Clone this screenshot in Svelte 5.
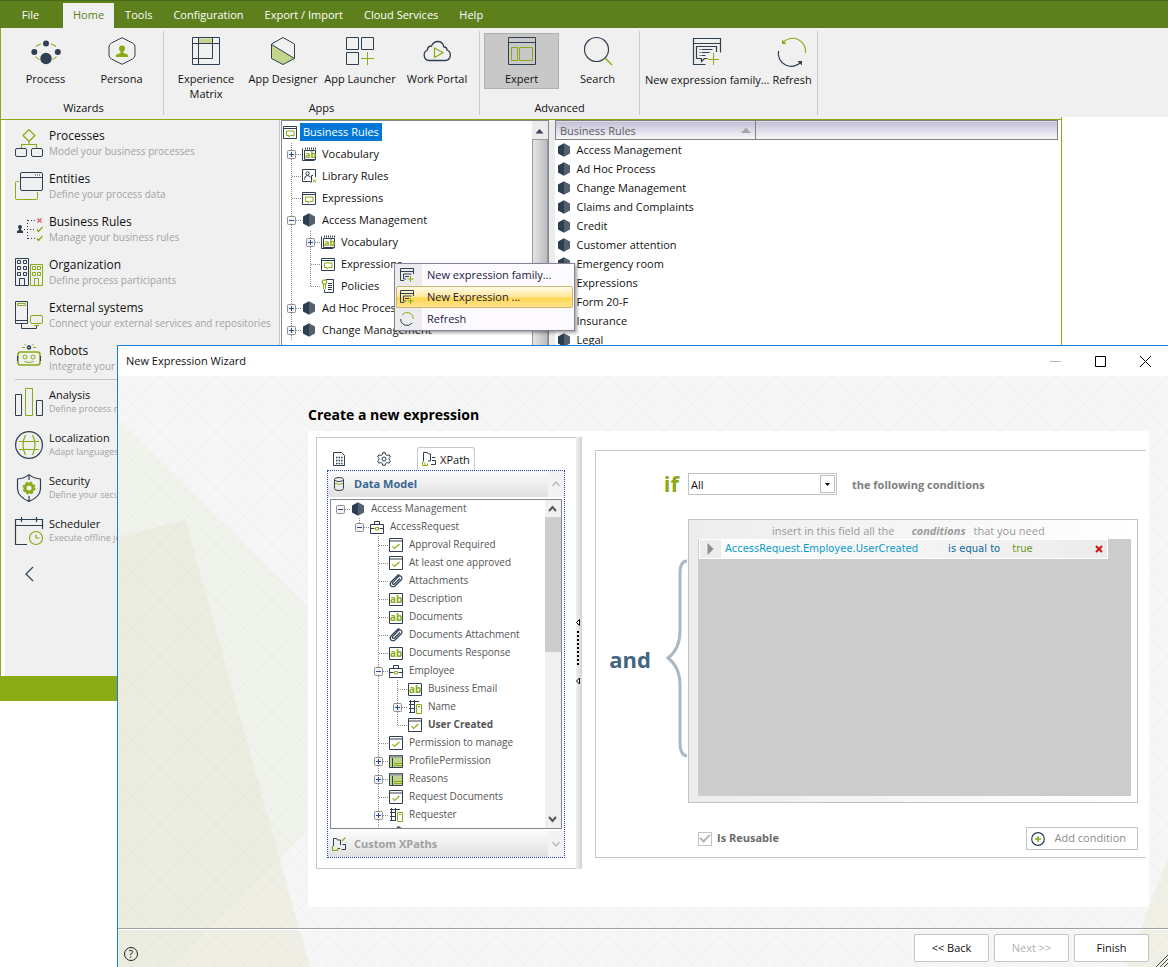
<script lang="ts">
	interface TreeRow {
		cols: string;
		toggle?: 'plus' | 'minus';
		icon: string;
		label: string;
		state?: 'selected' | 'strong';
	}

	const navy = '#2e3f52';
	const lime = '#8aab15';

	// Large glyphs, drawn on a 28 x 28 grid
	const icons: Record<string, string> = {
		process: `<g fill="none" stroke="${lime}" stroke-width="1.2"><path d="M4 9.500Q6 7.500 9 7M19 7q3 .5 5 2.500M3.500 19.500q1.500 2 4 3M24.500 19.500q-1.500 2-4 3"/></g><g fill="${navy}"><circle cx="14" cy="6.600" r="3"/><circle cx="2.300" cy="15" r="3"/><circle cx="25.800" cy="15" r="3"/><circle cx="14" cy="21.500" r="5.700"/></g>`,
		persona: `<path d="M14 .7 24.500 6q2.500 1.500 2.500 4v8q0 2.500-2.500 4L14 27.300 3.500 22Q1 20.500 1 18v-8q0-2.500 2.500-4z" fill="none" stroke="${navy}"/><g fill="${lime}"><circle cx="14" cy="11.500" r="3"/><path d="M12.500 13h3v3l4 1.500q1 .5.500 2.500H8q-.5-2 .5-2.500l4-1.500z"/></g>`,
		matrix: `<path d="M7 1.500h13V6H7z" fill="#c3d48d"/><path d="M.5.5h27v27H.5zM6.500.5v27M20.500.5v21H.5M.5 6.500h27" fill="none" stroke="${navy}"/>`,
		designer: `<path d="M2.500 7.500 25.500 21.500 14 27.500 2.500 21.500z" fill="#c3d48d"/><path d="M14 .5 25.500 7v14.500L14 27.500 2.500 21.500V7zM2.500 7.500l23 14" fill="none" stroke="${navy}"/>`,
		launcher: `<path d="M.5.5h12v12H.5zM15.500.5h12v12h-12zM.5 15.500h12v12H.5z" fill="none" stroke="${navy}"/><path d="M21.500 15v13M15 21.500h13" stroke="${lime}"/>`,
		portal: `<path d="M6 23.500a5.500 5.500 0 0 1-1.500-10.500q0-4 4-4 2-4.500 6.500-4.500t6 5.500q3 0 3 3a5.500 5.500 0 0 1-1.500 10.500z" fill="none" stroke="${navy}" stroke-width="1.300"/><path d="M11.500 11v9.500L20 15.700z" fill="none" stroke="${lime}" stroke-width="1.200"/>`,
		expert: `<path d="M.5.5h27v27H.5zM.5 5.500h27" fill="none" stroke="${navy}"/><path d="M3.500 10.500h6v13h-6zM11.500 10.500h13v13h-13z" fill="none" stroke="${lime}"/>`,
		search: `<circle cx="12.500" cy="12.500" r="12" fill="none" stroke="${navy}" stroke-width="1.200"/><path d="m21 21 7 7" stroke="${lime}" stroke-width="1.500"/>`,
		family: `<path d="M12.500 26.500H.5V.5h27v14M.5 5.500h27M23.500 14V8.500h-20v12h5v3l3-3h3" fill="none" stroke="${navy}" stroke-width="1.200"/><path d="M6.500 11.500h1m1 0h11m-13 3h1m1 0h8m-10 3h1m1 0h4" stroke="${navy}"/><path d="M20.500 15v12M15 21.500h11" stroke="${lime}"/>`,
		refresh: `<path d="M5 4.500a13 13 0 0 1 22.500 10.500" fill="none" stroke="${lime}" stroke-width="1.200"/><path d="M4 1.500v4.500h4.500z" fill="${lime}"/><path d="M.5 13A13 13 0 0 0 23 24" fill="none" stroke="${navy}" stroke-width="1.200"/><path d="M24 27.500V23h-4.500z" fill="${navy}"/>`,
		processes: `<path d="m14 .7 6 5.800-6 5.800-6-5.800zM14 12.500v3M6.500 19v-3.500h15V19" fill="none" stroke="${lime}" stroke-width="1.200"/><rect x=".5" y="19.500" width="11" height="8" rx="1.500" fill="none" stroke="${navy}"/><rect x="16.500" y="19.500" width="11" height="8" rx="1.500" fill="none" stroke="${navy}"/>`,
		entities: `<path d="M4 9.500H1.500q-1 0-1 1v16q0 1 1 1h20q1 0 1-1V20" fill="none" stroke="${lime}"/><rect x="5.500" y=".5" width="22" height="18" rx="1.500" fill="none" stroke="${navy}"/><path d="M5.500 5.500h22" stroke="${navy}"/><path d="M20 3h6" stroke="${navy}" stroke-dasharray="1 1"/>`,
		rules: `<g fill="${navy}"><circle cx="5" cy="12" r="2"/><path d="M4 13h2v2l2 1v2H2v-2l2-1z"/></g><path d="M9 14.500h12M12.500 5v19M13 5.500h7M13 23.500h7" stroke="${navy}" stroke-dasharray="1 2"/><path d="m22.500 3.500 4 4m0-4-4 4" stroke="#e0606c" stroke-width="1.400"/><path d="m22 14.500 1.500 2 4-4.500M22 23.500l1.500 2 4-4.500" fill="none" stroke="${lime}" stroke-width="1.400"/>`,
		organization: `<path d="M.5.500h13v27H.5zM2.500 2.500h3v3h-3zM8.500 2.500h3v3h-3zM2.500 8.500h3v3h-3zM8.500 8.500h3v3h-3zM2.500 14.500h3v3h-3zM8.500 14.500h3v3h-3zM4.500 27v-6.500h5V27" fill="none" stroke="${navy}"/><path d="M15.500 6.500h12v21h-12zM17.500 8.500h3v3h-3zM22.500 8.500h3v3h-3zM17.500 14.500h3v3h-3zM22.500 14.500h3v3h-3zM19.500 27v-6.500h4V27" fill="none" stroke="${lime}"/>`,
		external: `<path d="M.5.5h12v22H.5zM.5 19.500h12M6.500 23v4.500h15V25" fill="none" stroke="${navy}"/><path d="M2.500 2.500h8v2h-8z" fill="none" stroke="${lime}"/><rect x="15.500" y="14.500" width="12" height="8" rx="1.500" fill="none" stroke="${lime}"/><path d="M19 24.500h5" stroke="${lime}"/>`,
		robots: `<circle cx="14" cy="3.500" r="1.500" fill="none" stroke="${navy}" stroke-width="1.500"/><path d="M9.500 0 11 1.500M18.500 0 17 1.500M7 3.500h3M18 3.500h3" stroke="${lime}"/><rect x="3" y="8" width="22" height="13" rx="2.500" fill="none" stroke="${lime}" stroke-width="1.600"/><path d="M2.500 12v5M25.500 12v5" stroke="${navy}"/><g fill="none" stroke="${lime}"><circle cx="10" cy="13" r="2"/><circle cx="18" cy="13" r="2"/><path d="M9.500 17.500q4.500 2 9 0"/></g>`,
		analysis: `<path d="M.5 6.500h6v21h-6zM21.500 12.500h6v15h-6z" fill="none" stroke="${navy}"/><path d="M10.500.5h7v27h-7z" fill="none" stroke="${lime}"/>`,
		localization: `<circle cx="14" cy="14" r="13.400" fill="none" stroke="${navy}" stroke-width="1.200"/><path d="M4 10.500h20M4 18.500h20M10.500 4q-5 10 0 20M17.500 4q5 10 0 20" fill="none" stroke="${lime}" stroke-width="1.200"/>`,
		security: `<path d="M14 .6q5 4 11.500 4.400V15q-.5 8-11.500 12.400Q3 23 2.500 15V5Q9 4.600 14 .6zM14 1v5M14 22v5" fill="none" stroke="${navy}" stroke-width="1.200"/><circle cx="14" cy="14" r="4" fill="none" stroke="${lime}" stroke-width="3"/><circle cx="14" cy="14" r="5.700" fill="none" stroke="${lime}" stroke-width="1.500" stroke-dasharray="2.500 2"/>`,
		scheduler: `<path d="M12 27.500H.5v-25h27V12M.5 8.500h27M6.500 0v5M21.500 0v5" fill="none" stroke="${navy}" stroke-width="1.200"/><g fill="none" stroke="${lime}" stroke-width="1.200"><circle cx="21" cy="21" r="6.500"/><path d="M21 17.500v3.500h3.500"/></g>`
	};

	// Small glyphs, drawn on a 14 x 14 grid
	const glyphs: Record<string, string> = {
		expression: `<path d="M.5 1.500h13v12H.5zM.5 3.500h13" fill="none" stroke="${navy}"/><path d="M3.500 6h7.500v4.500H7.500L6 12v-1.500H3.500z" fill="none" stroke="${lime}"/>`,
		vocabulary: `<path d="M2.500 3.500h11v9h-11zM.5 1.500v12h12" fill="none" stroke="${navy}"/><path d="M3 1.500h11" stroke="${navy}" stroke-dasharray="1 1" stroke-width="2"/><text x="3" y="11" font-family="Open Sans, sans-serif" font-size="9" font-weight="700" fill="${lime}">ab</text>`,
		library: `<path d="M8 12.500H.5V.5h13V8" fill="none" stroke="${navy}"/><circle cx="5.500" cy="4.500" r="1.700" fill="none" stroke="${navy}"/><path d="M2.500 10.500q0-4 3-4 2 0 3 2M11 6.500H9.500V13H8" fill="none" stroke="${navy}"/><path d="m11 10.500 3 3m0-3-3 3" stroke="${lime}"/>`,
		policies: `<path d="M5 .5h7.500v13h-9v-3M7 4.500h4M7 6.500h4M7 8.500h4M7 10.500h4" fill="none" stroke="${navy}"/><circle cx="3.500" cy="3" r="2.200" fill="#fff" stroke="${lime}" stroke-width="1.200"/><path d="M2.500 5v5M4.500 5v5" stroke="${lime}"/>`,
		process: `<path d="M7 .3 1 3.500v7l6 3.200z" fill="#2c3e50"/><path d="m7 .3 6 3.200v7l-6 3.200z" fill="#53616f"/>`,
		addexpression: `<path d="M4 12.500H.5v-12h13V6M.5 3.500h13M11.500 6h-8v5H6M5 8.500h4" fill="none" stroke="${navy}"/><path d="M10.500 8v6M7.500 11h6" stroke="${lime}"/>`,
		refresh: `<path d="M2 3a6.300 6.300 0 0 1 11.300 4" fill="none" stroke="${lime}"/><path d="M.7 7A6.300 6.300 0 0 0 12 11" fill="none" stroke="${navy}"/>`,
		entity: `<path d="M.5 4.500h13v9H.5zM4.500 4.500v-3h5v3M.5 8.500h4M9.500 8.500h4" fill="none" stroke="${navy}"/><path d="M5.500 7.500h3v2.500h-3z" fill="none" stroke="${lime}"/>`,
		check: `<path d="M.5.500h13v13H.5zM.5 3h13" fill="none" stroke="${navy}"/><path d="m3.500 8 2 2.500L10.500 6" fill="none" stroke="${lime}" stroke-width="1.200"/>`,
		clip: `<path d="M11 4.500 5.500 10q-1 .8-1.700 0-.8-.8 0-1.700L9.500 2.500q1.500-1.200 3 0 1.200 1.500 0 3L6 12q-2 1.500-4 0-1.700-2 0-4l6.500-6.500q1-.8 2-.8" fill="none" stroke="${navy}" stroke-width="1.200"/>`,
		text: `<path d="M.5 1.500h13v12H.5z" fill="none" stroke="${navy}"/><text x="1" y="11" font-family="Open Sans, sans-serif" font-size="10" font-weight="700" fill="${lime}">ab</text>`,
		table: `<path d="M1 2h12v11H1z" fill="#c3d48d"/><path d="M.5 1.500h13v12H.5zM3.500 4v9" fill="none" stroke="${navy}"/><path d="M1 2.500h12" stroke="#8a96a2" stroke-width="2"/><path d="M5 9.500h8M5 11.500h8" stroke="${lime}"/>`,
		related: `<path d="M2.500 0v13M1 1.500h10M1 4.500h6M1 8.500h5M1 12.500h5M6.500 0v13" fill="none" stroke="${navy}"/><path d="M8.500 4.500h5v9h-5zM10 6.500h2" fill="#fff" stroke="${lime}"/>`,
		calc: `<path d="M1.500.5h8l3 3v10h-11z" fill="none" stroke="${navy}"/><path d="M4 5.500h1.500m1 0H8m1 0h1.500M4 8.500h1.500m1 0H8m1 0h1.500M4 11.500h1.500m1 0H8m1 0h1.500" stroke="${navy}" stroke-width="1.500"/>`,
		gear: `<circle cx="7" cy="7" r="2" fill="none" stroke="${navy}"/><path d="M5.700.7h2.600l.4 1.900 1.500.9 1.900-.7 1.300 2.200L12 6.300v1.400l1.400 1.300-1.300 2.200-1.900-.7-1.500.9-.4 1.900H5.700l-.4-1.900-1.500-.9-1.900.7L.6 9 2 7.700V6.300L.6 5l1.300-2.200 1.900.7 1.500-.9z" fill="none" stroke="${navy}"/>`,
		xpath: `<path d="M1.500 9.500V.5h4l1 1.500h2v7H6M10 5.500h3.500M9 12.500h4.500V8.500H10" fill="none" stroke="${navy}"/><path d="M.5 9.500v4h5v-2M3 10.500v3" fill="none" stroke="${lime}"/>`,
		cylinder: `<path d="M2.500 2.500v9q0 2 4.500 2t4.500-2v-9" fill="none" stroke="${navy}"/><ellipse cx="7" cy="2.500" rx="4.500" ry="2" fill="none" stroke="${navy}"/><path d="M3 6.500q4 1.500 8 0" fill="none" stroke="${lime}"/>`,
		xpaths: `<path d="M1.500 9V1.500h3l1 1.500h3v5M9.500 12.500h4v-5h-3M6 11.500h2" fill="none" stroke="${navy}"/><path d="M.5 9v4.500h5v-2M10 4l3.500-3.500" fill="none" stroke="${lime}" stroke-width="1.200"/>`
	};

	const menus = ['File', 'Home', 'Tools', 'Configuration', 'Export / Import', 'Cloud Services', 'Help'];

	const groups = [
		{
			title: 'Wizards',
			items: [
				{ icon: 'process', label: 'Process' },
				{ icon: 'persona', label: 'Persona' }
			]
		},
		{
			title: 'Apps',
			items: [
				{ icon: 'matrix', label: 'Experience Matrix' },
				{ icon: 'designer', label: 'App Designer' },
				{ icon: 'launcher', label: 'App Launcher' },
				{ icon: 'portal', label: 'Work Portal' }
			]
		},
		{
			title: 'Advanced',
			items: [
				{ icon: 'expert', label: 'Expert' },
				{ icon: 'search', label: 'Search' }
			]
		},
		{
			title: '',
			items: [
				{ icon: 'family', label: 'New expression family...' },
				{ icon: 'refresh', label: 'Refresh' }
			]
		}
	];

	const sections = [
		{ icon: 'processes', title: 'Processes', text: 'Model your business processes' },
		{ icon: 'entities', title: 'Entities', text: 'Define your process data' },
		{ icon: 'rules', title: 'Business Rules', text: 'Manage your business rules' },
		{ icon: 'organization', title: 'Organization', text: 'Define process participants' },
		{ icon: 'external', title: 'External systems', text: 'Connect your external services and repositories' },
		{ icon: 'robots', title: 'Robots', text: 'Integrate your' }
	];

	const tools = [
		{ icon: 'analysis', title: 'Analysis', text: 'Define process metrics' },
		{ icon: 'localization', title: 'Localization', text: 'Adapt languages' },
		{ icon: 'security', title: 'Security', text: 'Define your security' },
		{ icon: 'scheduler', title: 'Scheduler', text: 'Execute offline jobs' }
	];

	// cols: "|" line passes, "+" branch that goes on, "L" last branch, "-" branch only, " " empty
	const ruleTree: TreeRow[] = [
		{ cols: '', icon: 'expression', label: 'Business Rules', state: 'selected' },
		{ cols: '+', toggle: 'plus', icon: 'vocabulary', label: 'Vocabulary' },
		{ cols: '+', icon: 'library', label: 'Library Rules' },
		{ cols: '+', icon: 'expression', label: 'Expressions' },
		{ cols: '+', toggle: 'minus', icon: 'process', label: 'Access Management' },
		{ cols: '|+', toggle: 'plus', icon: 'vocabulary', label: 'Vocabulary' },
		{ cols: '|+', icon: 'expression', label: 'Expressions' },
		{ cols: '|L', icon: 'policies', label: 'Policies' },
		{ cols: '+', toggle: 'plus', icon: 'process', label: 'Ad Hoc Process' },
		{ cols: '+', toggle: 'plus', icon: 'process', label: 'Change Management' }
	];

	const modelTree: TreeRow[] = [
		{ cols: '-', toggle: 'minus', icon: 'process', label: 'Access Management' },
		{ cols: ' L', toggle: 'minus', icon: 'entity', label: 'AccessRequest' },
		{ cols: '  +', icon: 'check', label: 'Approval Required' },
		{ cols: '  +', icon: 'check', label: 'At least one approved' },
		{ cols: '  +', icon: 'clip', label: 'Attachments' },
		{ cols: '  +', icon: 'text', label: 'Description' },
		{ cols: '  +', icon: 'text', label: 'Documents' },
		{ cols: '  +', icon: 'clip', label: 'Documents Attachment' },
		{ cols: '  +', icon: 'text', label: 'Documents Response' },
		{ cols: '  +', toggle: 'minus', icon: 'entity', label: 'Employee' },
		{ cols: '  |+', icon: 'text', label: 'Business Email' },
		{ cols: '  |+', toggle: 'plus', icon: 'related', label: 'Name' },
		{ cols: '  |L', icon: 'check', label: 'User Created', state: 'strong' },
		{ cols: '  +', icon: 'check', label: 'Permission to manage' },
		{ cols: '  +', toggle: 'plus', icon: 'table', label: 'ProfilePermission' },
		{ cols: '  +', toggle: 'plus', icon: 'table', label: 'Reasons' },
		{ cols: '  +', icon: 'check', label: 'Request Documents' },
		{ cols: '  +', toggle: 'plus', icon: 'related', label: 'Requester' },
		{ cols: '  +', icon: 'clip', label: '' }
	];

	const rules = [
		'Access Management',
		'Ad Hoc Process',
		'Change Management',
		'Claims and Complaints',
		'Credit',
		'Customer attention',
		'Emergency room',
		'Expressions',
		'Form 20-F',
		'Insurance',
		'Legal'
	];

	const contextItems = [
		{ icon: 'addexpression', label: 'New expression family...' },
		{ icon: 'addexpression', label: 'New Expression ...' },
		{ icon: 'refresh', label: 'Refresh' }
	];

	let quantifier = $state('All');
	let reusable = $state(true);
</script>

{#snippet icon(name: string)}
	<svg class="icon" viewBox="0 0 28 28" width="28" height="28" aria-hidden="true">{@html icons[name]}</svg>
{/snippet}

{#snippet glyph(name: string)}
	<svg class="glyph" viewBox="0 0 14 14" width="14" height="14" aria-hidden="true">{@html glyphs[name]}</svg>
{/snippet}

{#snippet tree(rows: TreeRow[], h: number)}
	{#each rows as row}
		<li class="row {row.state ?? ''}" style="height: {h}px">
			{#each row.cols.split('') as col, i}
				<svg class="guide" width="19" height={h} aria-hidden="true">
					<g stroke="#8c8c8c" stroke-dasharray="1 1">
						{#if col === '|' || col === '+'}<path d="M8.5 0V{h}" />{/if}
						{#if col === 'L'}<path d="M8.5 0V{h / 2}" />{/if}
						{#if col === '+' || col === 'L' || col === '-'}<path d="M9 {h / 2 + 0.5}H18" />{/if}
					</g>
					{#if row.toggle && i === row.cols.length - 1}
						<rect x="4.5" y={h / 2 - 3.5} width="8" height="8" rx="1" fill="#f4f4f4" stroke="#8f8f8f" />
						<path d="M6 {h / 2 + 0.5}H11" stroke="#2a4a9b" />
						{#if row.toggle === 'plus'}<path d="M8.5 {h / 2 - 2}V{h / 2 + 3}" stroke="#2a4a9b" />{/if}
					{/if}
				</svg>
			{/each}
			{@render glyph(row.icon)}
			<span class="label">{row.label}</span>
		</li>
	{/each}
{/snippet}

{#snippet navItem(item: { icon: string; title: string; text: string })}
	<li>
		<a href="#{item.icon}">
			{@render icon(item.icon)}
			<span class="caption"><strong>{item.title}</strong><small>{item.text}</small></span>
		</a>
	</li>
{/snippet}

<div class="desktop">
	<main class="studio">
		<nav class="menubar">
			{#each menus as menu}
				<button type="button" class:active={menu === 'Home'}>{menu}</button>
			{/each}
		</nav>

		<div class="ribbon">
			{#each groups as group}
				<section class="group">
					<div class="commands">
						{#each group.items as item}
							<button type="button" class="command" class:pressed={item.label === 'Expert'}>
								{@render icon(item.icon)}
								<span>{item.label}</span>
							</button>
						{/each}
					</div>
					<span class="group-title">{group.title}</span>
				</section>
			{/each}
		</div>

		<div class="frame">
			<div class="panes">
				<nav class="sidebar">
					<ul>
						{#each sections as item}
							{@render navItem(item)}
						{/each}
					</ul>
					<ul class="minor">
						{#each tools as item}
							{@render navItem(item)}
						{/each}
					</ul>
					<button type="button" class="collapse" aria-label="Collapse">
						<svg width="10" height="16" viewBox="0 0 10 16"><path d="M9 1 2 8l7 7" fill="none" stroke="#2e3f52" stroke-width="1.2" /></svg>
					</button>
				</nav>

				<div class="explorer">
					<ul class="tree">
						{@render tree(ruleTree, 22)}
					</ul>
					<div class="track" aria-hidden="true">
						<svg width="15" height="18" viewBox="0 0 15 18"><path d="M3.500 12.500 7.500 8l4 4.500z" fill="#3a4256" /></svg>
						<span class="thumb"></span>
					</div>
				</div>

				<div class="listing">
					<table>
						<thead>
							<tr>
								<th class="name">
									<span>
										Business Rules
										<svg width="10" height="6" viewBox="0 0 10 6" aria-hidden="true"><path d="m0 6 5-5.500L10 6z" fill="#a5a5ab" /></svg>
									</span>
								</th>
								<th></th>
							</tr>
						</thead>
						<tbody>
							{#each rules as rule}
								<tr>
									<td colspan="2"><span>{@render glyph('process')}{rule}</span></td>
								</tr>
							{/each}
						</tbody>
					</table>
				</div>
			</div>
			<div class="status"></div>
		</div>

		<div class="context" role="menu">
			{#each contextItems as item, i}
				<button type="button" role="menuitem" class:hot={i === 1}>
					{@render glyph(item.icon)}
					<span>{item.label}</span>
				</button>
			{/each}
		</div>
	</main>

	<section class="wizard">
		<header class="titlebar">
			<span>New Expression Wizard</span>
			<div class="window-buttons">
				<button type="button" aria-label="Minimize"><svg width="11" height="11"><path d="M0 5.500h11" stroke="#b5b5b5" /></svg></button>
				<button type="button" aria-label="Maximize"><svg width="11" height="11"><path d="M.5.500h10v10H.5z" fill="none" stroke="#000" /></svg></button>
				<button type="button" aria-label="Close"><svg width="11" height="11"><path d="m0 0 11 11M11 0 0 11" stroke="#000" /></svg></button>
			</div>
		</header>

		<div class="canvas">
			<svg class="backdrop" aria-hidden="true">
				<defs>
					<pattern id="hatch" width="14" height="14" patternUnits="userSpaceOnUse">
						<path d="M0 0 14 14M14 0 0 14" stroke="#000" stroke-opacity=".02" />
					</pattern>
				</defs>
				<path d="M0 44 302 342 53 591H0z" fill="#e8efe2" fill-opacity=".5" />
				<path d="M0 161 67 144 192 591H0z" fill="#e9e8d3" fill-opacity=".5" />
				<svg x="100%" overflow="visible"><path d="M0 480-41 591H0z" fill="#e9e8d3" fill-opacity=".4" /></svg>
				<rect width="100%" height="100%" fill="url(#hatch)" />
			</svg>

			<div class="content">
				<h1>Create a new expression</h1>
				<div class="sheet">
					<div class="picker">
						<div class="tabs">
							<button type="button" aria-label="Variables">{@render glyph('calc')}</button>
							<button type="button" aria-label="Functions">{@render glyph('gear')}</button>
							<button type="button" class="current">{@render glyph('xpath')}XPath</button>
						</div>
						<div class="accordion">
							<button type="button" class="bar">
								{@render glyph('cylinder')}
								<span>Data Model</span>
								<svg class="fold" width="16" height="26"><path d="m4.500 15 3.500-4 3.500 4" fill="none" stroke="#bdbdbd" stroke-width="1.500" /></svg>
							</button>
							<div class="model">
								<ul class="tree">
									{@render tree(modelTree, 18)}
								</ul>
								<div class="slider" aria-hidden="true">
									<svg width="15" height="17"><path d="m4 11 3.500-4 3.500 4" fill="none" stroke="#555" stroke-width="2" /></svg>
									<span class="knob"></span>
									<svg width="15" height="17"><path d="m4 6 3.500 4L11 6" fill="none" stroke="#555" stroke-width="2" /></svg>
								</div>
							</div>
							<button type="button" class="bar closed">
								{@render glyph('xpaths')}
								<span>Custom XPaths</span>
								<svg class="fold" width="16" height="26"><path d="m4.500 11 3.500 4 3.500-4" fill="none" stroke="#bdbdbd" stroke-width="1.500" /></svg>
							</button>
						</div>
					</div>
					<div class="splitter">
						<svg width="6" height="68" aria-hidden="true">
							<path d="M3.500.5v6L.5 3.500zM3.500 59v6L.5 62z" fill="#fff" stroke="#000" />
							<path d="M2 12v36" stroke="#000" stroke-width="2" stroke-dasharray="2 2" />
						</svg>
					</div>

					<div class="editor">
						<b class="if">if</b>
						<div class="quantity">
							<div class="combo">
								<select bind:value={quantifier} aria-label="Which conditions">
									<option>All</option>
								</select>
								<svg width="15" height="18" aria-hidden="true"><path d="M.5.500h14v17H.5z" fill="#fff" stroke="#bdbdbd" /><path d="M5 8h5L7.500 11z" /></svg>
							</div>
							<span>the following conditions</span>
						</div>

						<div class="and">
							<b>and</b>
							<svg width="22" height="200" aria-hidden="true"><path d="M22 2q-7 0-7 12v58q0 18-12 27 12 9 12 27v58q0 12 7 13" fill="none" stroke="#abb9c5" stroke-width="3" /></svg>
						</div>
						<div class="conditions">
							<p>insert in this field all the <em>conditions</em> that you need</p>
							<div class="well">
								<div class="condition">
									<svg width="21" height="18" aria-hidden="true"><path d="M7.500 3v12l6-6z" fill="#8d8d8d" /></svg>
									<a href="#path">AccessRequest.Employee.UserCreated</a>
									<span class="operator">is equal to</span>
									<span class="value">true</span>
									<button type="button" aria-label="Remove condition">
										<svg width="8" height="8"><path d="m1 1 6 6M7 1 1 7" stroke="#cc1414" stroke-width="2" /></svg>
									</button>
								</div>
							</div>
						</div>

						<div class="options">
							<label>
								<input type="checkbox" bind:checked={reusable} />
								<span>Is Reusable</span>
							</label>
							<button type="button" class="add">
								<svg width="14" height="14"><circle cx="7" cy="7" r="6.300" fill="none" stroke="#2e3f52" stroke-width="1.2" /><path d="M7 4v6M4 7h6" stroke="#8aab15" stroke-width="1.500" /></svg>
								<span>Add condition</span>
							</button>
						</div>
					</div>
				</div>
			</div>

			<footer>
				<button type="button" class="help" aria-label="Help">?</button>
				<button type="button" class="step">&lt;&lt; Back</button>
				<button type="button" class="step" disabled>Next &gt;&gt;</button>
				<button type="button" class="step">Finish</button>
				<svg class="grip" width="12" height="12" aria-hidden="true"><path d="M0 12 12 0M4 12l8-8M8 12l4-4" stroke="#444" /></svg>
			</footer>
		</div>
	</section>
</div>

<style>
	:global(body) {
		margin: 0;
		background: #fff;
	}

	.desktop {
		display: grid;
		min-height: 100vh;
		overflow: hidden;
		font-family: 'Open Sans', 'Noto Sans', sans-serif;
		font-size: 11px;
		line-height: 15px;
		color: #111;
	}

	.desktop > * {
		grid-area: 1 / 1;
	}

	button,
	select {
		border: 0;
		padding: 0;
		background: none;
		font: inherit;
		color: inherit;
	}

	ul {
		margin: 0;
		padding: 0;
		list-style: none;
	}

	svg {
		display: block;
		flex: none;
	}

	.icon,
	.glyph {
		overflow: visible;
	}

	.studio {
		position: relative;
		align-self: start;
	}

	.menubar {
		display: flex;
		align-items: end;
		height: 28px;
		box-sizing: border-box;
		border-top: 1px solid #49681a;
		padding-left: 9px;
		background: #5d801c;
	}

	.menubar button {
		height: 25px;
		padding: 0 10px 2px 11px;
		color: #fff;
		white-space: nowrap;
	}

	.menubar button:first-child {
		width: 54px;
		padding: 0 11px 2px 0;
	}

	.menubar .active {
		padding: 0 10px 2px;
		background: #f0f0f0;
		color: #5d801c;
	}

	.ribbon {
		display: flex;
		border-left: 1px solid #8aab15;
		padding: 3px 0 2px 3px;
		background: #f0f0f0;
	}

	.group {
		display: grid;
		grid-template-rows: 67px 15px;
		justify-items: center;
		border-right: 1px solid #cbcbcb;
		padding: 2px 4px 0;
	}

	.commands {
		display: flex;
		align-items: start;
		gap: 1px;
	}

	.command {
		display: grid;
		justify-items: center;
		gap: 6px;
		box-sizing: border-box;
		width: 75px;
		border: 1px solid transparent;
		padding: 3px 0 2px;
	}

	.group:nth-child(2) .command {
		width: 76px;
	}

	.group:last-child .command {
		width: auto;
		padding: 4px 0;
	}

	.command.pressed {
		border-color: #b0b0b0;
		background: #c8c8c8;
	}

	.frame {
		margin-right: 106px;
		border: 1px solid #8aab15;
		border-top: 0;
		padding-top: 2px;
		background: #f0f0f0;
	}

	.panes {
		display: flex;
		border-top: 1px solid #8aab15;
		background: #fff;
	}

	.status {
		height: 24px;
		background: #8aab15;
	}

	.sidebar {
		box-sizing: border-box;
		width: 275px;
		margin-left: 4px;
		border-right: 1px solid #c8c8c8;
		padding: 1px 0 81px 10px;
		background: #f0f0f0;
	}

	.sidebar a {
		display: flex;
		align-items: center;
		gap: 6px;
		height: 43px;
		color: inherit;
		text-decoration: none;
		white-space: nowrap;
	}

	.caption {
		display: grid;
	}

	.caption strong {
		font-size: 12px;
		font-weight: 400;
		line-height: 17px;
	}

	.caption small {
		font-size: 10px;
		line-height: 15px;
		color: #a3a3a3;
	}

	.minor {
		border-top: 1px solid #c4c4c4;
	}

	.minor .caption strong {
		font-size: 11px;
		line-height: 15px;
	}

	.minor .caption small {
		font-size: 9px;
		line-height: 14px;
	}

	.collapse {
		display: grid;
		place-items: center;
		width: 28px;
		height: 43px;
	}

	.explorer {
		display: flex;
		box-sizing: border-box;
		width: 268px;
		margin-left: 1px;
		border: 1px solid #828790;
		overflow: hidden;
	}

	.tree {
		flex: 1;
		min-width: 0;
		padding-left: 1px;
	}

	.row {
		display: flex;
		align-items: center;
		white-space: nowrap;
	}

	.row .label {
		margin-left: 3px;
		padding: 0 3px 2px;
	}

	.row.selected .label {
		padding: 0 3px;
		background: #0078d7;
		color: #fff;
		line-height: 18px;
	}

	.strong {
		font-weight: 700;
	}

	.track {
		display: grid;
		grid-template-rows: 18px 1fr;
		width: 16px;
		background: #ececec;
	}

	.thumb {
		box-sizing: border-box;
		border: 1px solid #9a9a9e;
		background: linear-gradient(90deg, #e4e4e6, #bcbcc0);
	}

	.listing {
		flex: 1;
		min-width: 0;
		margin-right: 3px;
		border-left: 6px solid #ececec;
	}

	table {
		width: 100%;
		table-layout: fixed;
		border-collapse: collapse;
	}

	th {
		box-sizing: border-box;
		height: 19px;
		border: 1px solid #808080;
		padding: 0 4px;
		background: linear-gradient(#c2bfd4, #f9f9fc);
		font-weight: 400;
		color: #5c5c64;
	}

	th.name {
		width: 200px;
	}

	th span {
		display: flex;
		align-items: center;
		justify-content: space-between;
	}

	td {
		height: 19px;
		padding: 0 1px;
	}

	td span {
		display: flex;
		align-items: center;
		gap: 6px;
	}

	.context {
		position: absolute;
		top: 263px;
		left: 394px;
		width: 179px;
		border: 1px solid #868394;
		background: linear-gradient(90deg, #ececef 27px, #fcfaff 27px);
		box-shadow: 2px 2px 3px rgba(0, 0, 0, 0.35);
	}

	.context button {
		display: flex;
		align-items: center;
		gap: 13px;
		box-sizing: border-box;
		width: 177px;
		height: 22px;
		margin: 0 1px;
		border: 1px solid transparent;
		border-radius: 2px;
		padding-left: 3px;
		color: #1a1a3c;
	}

	.context span {
		padding-bottom: 2px;
	}

	.context .hot {
		border-color: #cdb572;
		background: linear-gradient(#fffbe8, #ffe798 50%, #ffd651 55%, #ffe48d);
	}

	.wizard {
		display: grid;
		grid-template-rows: 30px 1fr;
		margin: 345px 0 0 117px;
		border: 1px solid #1a7fd4;
		border-width: 1px 0 0 1px;
		background: #f6f6f6;
		z-index: 1;
	}

	.titlebar {
		display: flex;
		align-items: center;
		justify-content: space-between;
		padding-left: 8px;
		background: #fff;
	}

	.titlebar span {
		padding-bottom: 2px;
	}

	.window-buttons {
		display: flex;
	}

	.window-buttons button {
		display: grid;
		place-items: center;
		width: 45px;
		height: 28px;
	}

	.canvas {
		position: relative;
		display: grid;
		grid-template-rows: 1fr auto;
	}

	.backdrop {
		position: absolute;
		inset: 0;
		width: 100%;
		height: 100%;
	}

	.content,
	footer {
		position: relative;
	}

	.content {
		padding: 29px 19px 21px 190px;
	}

	h1 {
		margin: 0 0 6px;
		font-size: 14px;
		line-height: 20px;
		color: #000;
	}

	.sheet {
		display: flex;
		align-items: start;
		border-radius: 3px;
		padding: 6px 3px 38px 8px;
		background: #fff;
	}

	.picker {
		box-sizing: border-box;
		width: 260px;
		border: 1px solid #c8c8c8;
		border-right: 0;
		padding: 9px 11px 10px 10px;
	}

	.tabs {
		display: flex;
		align-items: center;
	}

	.tabs button {
		display: flex;
		align-items: center;
		justify-content: center;
		gap: 4px;
		box-sizing: border-box;
		width: 45px;
		height: 23px;
		padding-right: 22px;
	}

	.tabs .current {
		width: 58px;
		border: 1px solid #c8c8c8;
		border-bottom: 0;
		border-radius: 3px 3px 0 0;
		padding: 0;
	}

	.accordion {
		display: grid;
		gap: 2px;
		border: 1px dotted #1c3fa8;
	}

	.bar {
		display: flex;
		align-items: center;
		gap: 8px;
		height: 26px;
		padding-left: 4px;
		background: linear-gradient(#fcfcfc, #e0e0e0);
		font-size: 11px;
		font-weight: 700;
		text-align: left;
		color: #3a6694;
	}

	.bar span {
		flex: 1;
		padding-bottom: 1px;
	}

	.closed {
		color: #a0a0a0;
	}

	.fold {
		background: #f3f3f3;
	}

	.model {
		display: flex;
		height: 328px;
		margin: 0 2px;
		border: 1px solid #828790;
		overflow: hidden;
		background: #fff;
		font-size: 10px;
		color: #555;
	}

	.slider {
		display: grid;
		grid-template-rows: 17px 1fr 17px;
		width: 16px;
		background: #f0f0f0;
	}

	.knob {
		height: 135px;
		background: #cdcdcd;
	}

	.splitter {
		display: grid;
		place-items: center;
		align-self: stretch;
		width: 6px;
		background: linear-gradient(90deg, #f0f0f0, #d4d4d4);
	}

	.editor {
		display: grid;
		grid-template-columns: 92px 1fr;
		row-gap: 24px;
		flex: 1;
		margin: 13px 0 0 13px;
		border: 1px solid #c8c8c8;
		border-right: 0;
		padding: 22px 8px 7px 0;
	}

	.if {
		justify-self: end;
		margin-right: 9px;
		font-size: 22px;
		line-height: 20px;
		color: #8aab15;
	}

	.quantity {
		display: flex;
		align-items: center;
		gap: 15px;
		font-weight: 700;
		color: #7d7d7d;
	}

	.combo {
		display: grid;
		box-sizing: border-box;
		width: 149px;
		height: 22px;
		border: 1px solid #c3c3c3;
	}

	.combo > * {
		grid-area: 1 / 1;
	}

	.combo select {
		appearance: none;
		padding: 0 2px;
		background: #fff;
		font-weight: 400;
		color: #111;
	}

	.combo svg {
		align-self: center;
		justify-self: end;
		margin-right: 1px;
		pointer-events: none;
	}

	.and {
		display: flex;
		align-items: center;
		justify-content: end;
		gap: 14px;
		padding: 0 1px 4px 0;
		font-size: 22px;
		color: #426482;
	}

	.conditions {
		border: 1px solid #c3c3c3;
		padding: 3px 6px 6px 9px;
		background: linear-gradient(90deg, #ededed, #fff);
	}

	.conditions p {
		margin: 0;
		padding-left: 74px;
		line-height: 16px;
		color: #9a9a9a;
	}

	.conditions em {
		padding: 0 5px 0 14px;
		font-weight: 700;
	}

	.well {
		height: 257px;
		background: #ccc;
	}

	.condition {
		display: flex;
		align-items: center;
		box-sizing: border-box;
		height: 20px;
		margin: 0 23px 0 1px;
		border: 1px solid #fff;
		background: linear-gradient(90deg, #fdfdfd, #ececec);
		font-family: 'DejaVu Sans', sans-serif;
		font-size: 10px;
		color: #0b6aa2;
	}

	.condition svg {
		background: #ececec;
	}

	.condition a,
	.condition span {
		padding-bottom: 2px;
	}

	.condition a {
		margin: 0 30px 0 4px;
		color: #0a9bcf;
		text-decoration: none;
	}

	.condition .value {
		flex: 1;
		margin-left: 12px;
		color: #6a9a1a;
	}

	.condition button {
		margin-right: 4px;
	}

	.options {
		display: flex;
		grid-column: 2;
		align-items: center;
		justify-content: space-between;
		padding-left: 10px;
	}

	.options label {
		display: flex;
		align-items: center;
		gap: 5px;
		font-weight: 700;
		color: #6b6b6b;
	}

	.options span {
		padding-bottom: 2px;
	}

	.options input {
		appearance: none;
		display: grid;
		place-items: center;
		box-sizing: border-box;
		width: 14px;
		height: 14px;
		margin: 0;
		border: 1px solid #c3c3c3;
	}

	.options input:checked::before {
		content: '';
		width: 8px;
		height: 4px;
		margin-bottom: 3px;
		border: solid #b5b5b5;
		border-width: 0 0 2px 2px;
		rotate: -45deg;
	}

	.add {
		display: flex;
		align-items: center;
		gap: 10px;
		box-sizing: border-box;
		height: 23px;
		border: 1px solid #c3c3c3;
		padding: 0 11px 0 4px;
		background: #fff;
		color: #8c8c8c;
	}

	footer {
		display: flex;
		gap: 5px;
		align-items: center;
		height: 38px;
		border-top: 1px solid #a0a0a0;
		padding-left: 6px;
		box-shadow: inset 0 1px #fff;
	}

	.help {
		width: 14px;
		height: 14px;
		box-sizing: border-box;
		margin: 11px auto 0 0;
		border: 1px solid #222;
		border-radius: 50%;
		font-size: 10px;
		line-height: 12px;
	}

	.step {
		box-sizing: border-box;
		width: 75px;
		height: 28px;
		border: 1px solid #c4c4c4;
		border-radius: 2px;
		padding-bottom: 1px;
		background: #fff;
	}

	.step:disabled {
		color: #b0b0b0;
	}

	.grip {
		align-self: end;
		margin-left: 2px;
	}
</style>
